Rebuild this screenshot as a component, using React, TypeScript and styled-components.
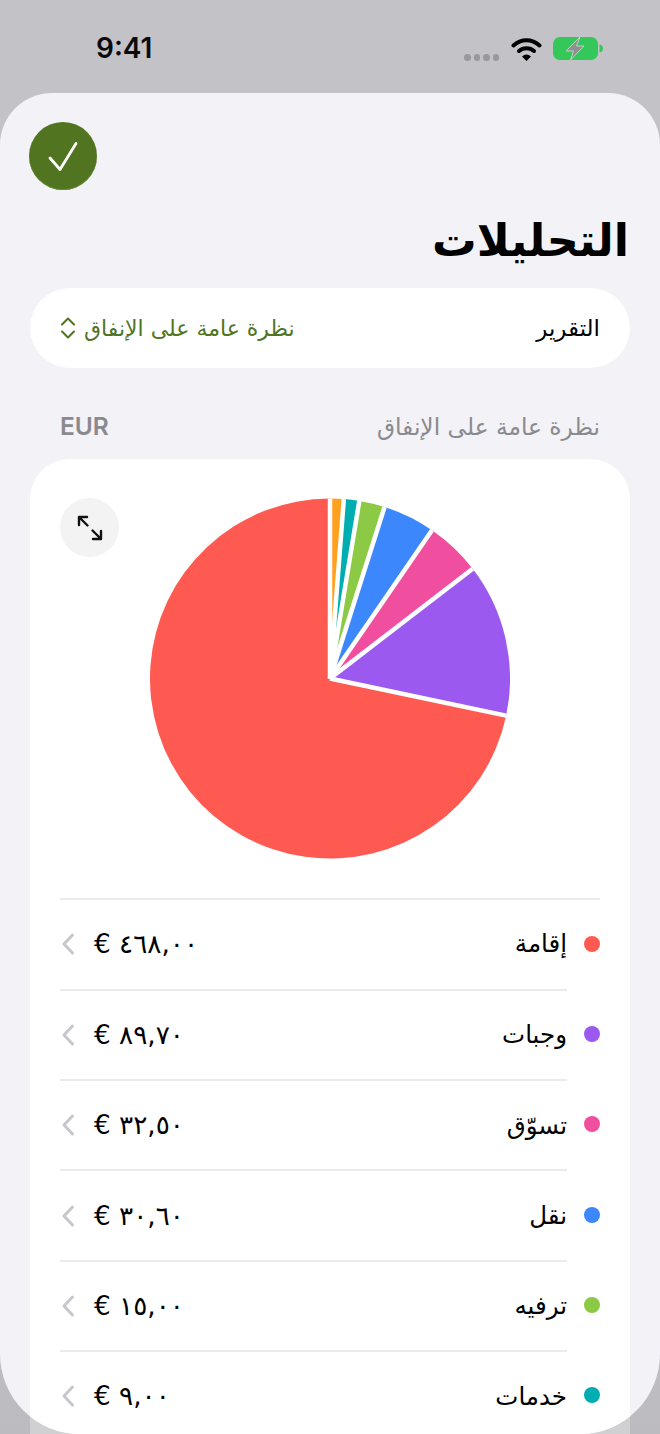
import React from "react";
import styled, { createGlobalStyle } from "styled-components";

const Global = createGlobalStyle`
  html, body { margin: 0; padding: 0; }
  body { width: 660px; height: 1434px; overflow: hidden; background: #c3c2c7; font-family: "DejaVu Sans", "Noto Sans", sans-serif; }
`;

const Screen = styled.div`
  position: relative;
  width: 660px;
  height: 1434px;
  display: flex;
  flex-direction: column;
  overflow: hidden;
  background: linear-gradient(180deg, #c3c2c7 0%, #c3c2c7 80%, #bcbcc0 100%);
`;

const BehindCard = styled.div`
  position: absolute;
  left: 30px;
  right: 30px;
  bottom: 0;
  height: 60px;
  background: #d0d0d2;
`;

const StatusBar = styled.div`
  height: 93px;
  flex: none;
  display: flex;
  align-items: flex-start;
  justify-content: space-between;
  padding: 0 56px 0 96px;
  box-sizing: border-box;
`;

const Time = styled.div`
  font-family: Inter, "Liberation Sans", sans-serif;
  font-size: 28px;
  font-weight: 600;
  line-height: 34px;
  color: #0b0b0c;
  margin-top: 31px;
`;

const StatusIcons = styled.div`
  display: flex;
  align-items: flex-start;
  margin-top: 36px;
`;

const SignalDots = styled.div`
  display: flex;
  gap: 3px;
  margin-top: 18px;
  margin-right: 12px;
`;

const SignalDot = styled.span`
  width: 6.5px;
  height: 7px;
  border-radius: 50%;
  background: #98989d;
`;

const BatteryIcon = styled.svg`
  margin-left: 11px;
`;

const Sheet = styled.div`
  position: relative;
  flex: 1;
  background: #f2f2f7;
  border-radius: 52px 52px 80px 80px;
  overflow: hidden;
  padding: 29px 30px 0;
  box-sizing: border-box;
  display: flex;
  flex-direction: column;
`;

const DoneButton = styled.div`
  width: 68px;
  height: 68px;
  margin-left: -1px;
  border-radius: 50%;
  flex: none;
  background: #50741f;
  box-shadow: inset 0 -1px 0 #6a8a3a;
  display: flex;
  align-items: center;
  justify-content: center;
`;

const Title = styled.h1`
  margin: 19px 1px 0 0;
  font-size: 44.5px;
  font-weight: 700;
  line-height: 64px;
  color: #000;
  text-align: right;
  direction: rtl;
`;

const ReportRow = styled.div`
  margin-top: 15px;
  height: 80px;
  flex: none;
  background: #fff;
  border-radius: 40px;
  padding: 0 30px;
  display: flex;
  align-items: center;
  justify-content: space-between;
  direction: rtl;
`;

const ReportLabel = styled.span`
  font-size: 23px;
  color: #000;
`;

const ReportValue = styled.span`
  display: flex;
  align-items: center;
  gap: 8px;
  font-size: 22px;
  color: #50741f;
`;

const SectionHeader = styled.div`
  margin-top: 43px;
  height: 40px;
  padding: 0 30px;
  display: flex;
  align-items: center;
  justify-content: space-between;
  direction: rtl;
  color: #8a8a8e;
  font-size: 23.3px;
`;

const Currency = styled.span`
  font-family: Inter, "Liberation Sans", sans-serif;
  font-weight: 600;
  font-size: 24.500px;
`;

const Card = styled.div`
  position: relative;
  margin-top: 18px;
  background: #fff;
  border-radius: 40px 40px 0 0;
  padding: 39px 30px 0;
  flex: 1;
`;

const ExpandButton = styled.div`
  position: absolute;
  left: 30px;
  top: 39px;
  width: 59px;
  height: 59px;
  border-radius: 50%;
  background: #f3f3f4;
  display: flex;
  align-items: center;
  justify-content: center;
`;

const PieWrap = styled.div`
  display: flex;
  justify-content: center;
  height: 361px;
`;

const Divider = styled.div`
  height: 2px;
  margin-top: 39px;
  background: #ebebed;
`;

const List = styled.div`
  direction: rtl;
  margin-top: -1.5px;
`;

const Row = styled.div`
  display: flex;
  align-items: center;
  gap: 17px;
  height: 90.3px;
`;

const Dot = styled.span<{ $color: string }>`
  width: 16px;
  height: 16px;
  border-radius: 50%;
  flex: none;
  background: ${(p) => p.$color};
`;

const RowBody = styled.div<{ $first: boolean }>`
  flex: 1;
  height: 100%;
  display: flex;
  align-items: center;
  justify-content: space-between;
  box-sizing: border-box;
  border-top: ${(p) => (p.$first ? "none" : "2px solid #ebebed")};
`;

const RowName = styled.span`
  font-size: 24.500px;
  color: #000;
`;

const RowAmount = styled.span`
  display: flex;
  align-items: center;
  gap: 19px;
  direction: ltr;
  flex-direction: row;
`;

const Amount = styled.span`
  font-size: 26.3px;
  color: #000;
  unicode-bidi: isolate;
  direction: ltr;
`;

const slices = [
  { v: 8, c: "#ffa11f" },
  { v: 9, c: "#00adb0" },
  { v: 15, c: "#8cc944" },
  { v: 30.6, c: "#3b87fb" },
  { v: 32.5, c: "#f04fa0" },
  { v: 89.7, c: "#9b59f0" },
  { v: 468, c: "#ff5a52" },
];

const rows = [
  { name: "إقامة", amount: "€ ٤٦٨,٠٠", c: "#ff5a52" },
  { name: "وجبات", amount: "€ ٨٩,٧٠", c: "#9b59f0" },
  { name: "تسوّق", amount: "€ ٣٢,٥٠", c: "#f04fa0" },
  { name: "نقل", amount: "€ ٣٠,٦٠", c: "#3b87fb" },
  { name: "ترفيه", amount: "€ ١٥,٠٠", c: "#8cc944" },
  { name: "خدمات", amount: "€ ٩,٠٠", c: "#00adb0" },
];

function Pie() {
  const total = slices.reduce((s, x) => s + x.v, 0);
  const R = 180;
  const pt = (a: number): [number, number] => [180 + R * Math.sin(a), 180.5 - R * Math.cos(a)];
  let acc = 0;
  const parts = slices.map((s) => {
    const a0 = (acc / total) * Math.PI * 2;
    acc += s.v;
    const a1 = (acc / total) * Math.PI * 2;
    const [x0, y0] = pt(a0);
    const [x1, y1] = pt(a1);
    return { ...s, a0, d: `M180 180.5L${x0} ${y0}A${R} ${R} 0 ${a1 - a0 > Math.PI ? 1 : 0} 1 ${x1} ${y1}Z` };
  });
  return (
    <svg width="360" height="361" viewBox="0 0 360 361">
      {parts.map((p) => (
        <path key={p.c} d={p.d} fill={p.c} />
      ))}
      {parts.map((p) => {
        const [x, y] = pt(p.a0);
        return <line key={p.c} x1="180" y1="180.5" x2={x} y2={y} stroke="#fff" strokeWidth="4.5" />;
      })}
    </svg>
  );
}

export default function App() {
  return (
    <Screen>
      <Global />
      <BehindCard />
      <StatusBar>
        <Time>9:41</Time>
        <StatusIcons>
          <SignalDots>
            <SignalDot />
            <SignalDot />
            <SignalDot />
            <SignalDot />
          </SignalDots>
          <svg width="31" height="25" viewBox="0 0 31 25">
            <path d="M2.500 9.500C10 2.500 21 2.500 28.500 9.500" fill="none" stroke="#000" strokeWidth="4" strokeLinecap="round" />
            <path d="M8 15C12 11.200 19 11.200 23 15" fill="none" stroke="#000" strokeWidth="4" strokeLinecap="round" />
            <path d="M11 20.500Q15.500 16.500 20 20.500L15.500 25Z" fill="#000" />
          </svg>
          <BatteryIcon width="51" height="25" viewBox="0 0 51 25">
            <rect x="0" y="1" width="45" height="23" rx="7" fill="#34c759" />
            <path d="M46.500 8.500C49 9 50 10.500 50 12.500S49 16 46.500 16.500Z" fill="#34c759" />
            <path d="M27 1L13 15H20.500L17.500 24L31 10H23.500Z" fill="#8e8e93" stroke="#b5d8c0" strokeWidth="1" />
          </BatteryIcon>
        </StatusIcons>
      </StatusBar>
      <Sheet>
        <DoneButton>
          <svg width="32" height="32" viewBox="0 0 32 32">
            <path d="M3 18L13 29.500L29 3.500" fill="none" stroke="#fff" strokeWidth="2.800" strokeLinecap="round" strokeLinejoin="round" />
          </svg>
        </DoneButton>
        <Title>التحليلات</Title>
        <ReportRow>
          <ReportLabel>التقرير</ReportLabel>
          <ReportValue>
            نظرة عامة على الإنفاق
            <svg width="16" height="24" viewBox="0 0 16 24">
              <path d="M2 8.500L8 2.500L14 8.500M2 15.500L8 21.500L14 15.500" fill="none" stroke="#50741f" strokeWidth="2" strokeLinecap="round" strokeLinejoin="round" />
            </svg>
          </ReportValue>
        </ReportRow>
        <SectionHeader>
          <span>نظرة عامة على الإنفاق</span>
          <Currency>EUR</Currency>
        </SectionHeader>
        <Card>
          <ExpandButton>
            <svg width="28" height="28" viewBox="0 0 28 28">
              <path d="M3 3L11.500 11.500M3 3V11M3 3H11M25 25L16.500 16.500M25 25V17M25 25H17" fill="none" stroke="#111" strokeWidth="2.400" strokeLinecap="round" strokeLinejoin="round" />
            </svg>
          </ExpandButton>
          <PieWrap>
            <Pie />
          </PieWrap>
          <Divider />
          <List>
            {rows.map((r, i) => (
              <Row key={r.name}>
                <Dot $color={r.c} />
                <RowBody $first={i === 0}>
                  <RowName>{r.name}</RowName>
                  <RowAmount>
                    <svg width="15" height="24" viewBox="0 0 15 24">
                      <path d="M12.500 3L4 12L12.500 21" fill="none" stroke="#c7c7cc" strokeWidth="3" strokeLinecap="round" strokeLinejoin="round" />
                    </svg>
                    <Amount>{r.amount}</Amount>
                  </RowAmount>
                </RowBody>
              </Row>
            ))}
          </List>
        </Card>
      </Sheet>
    </Screen>
  );
}
